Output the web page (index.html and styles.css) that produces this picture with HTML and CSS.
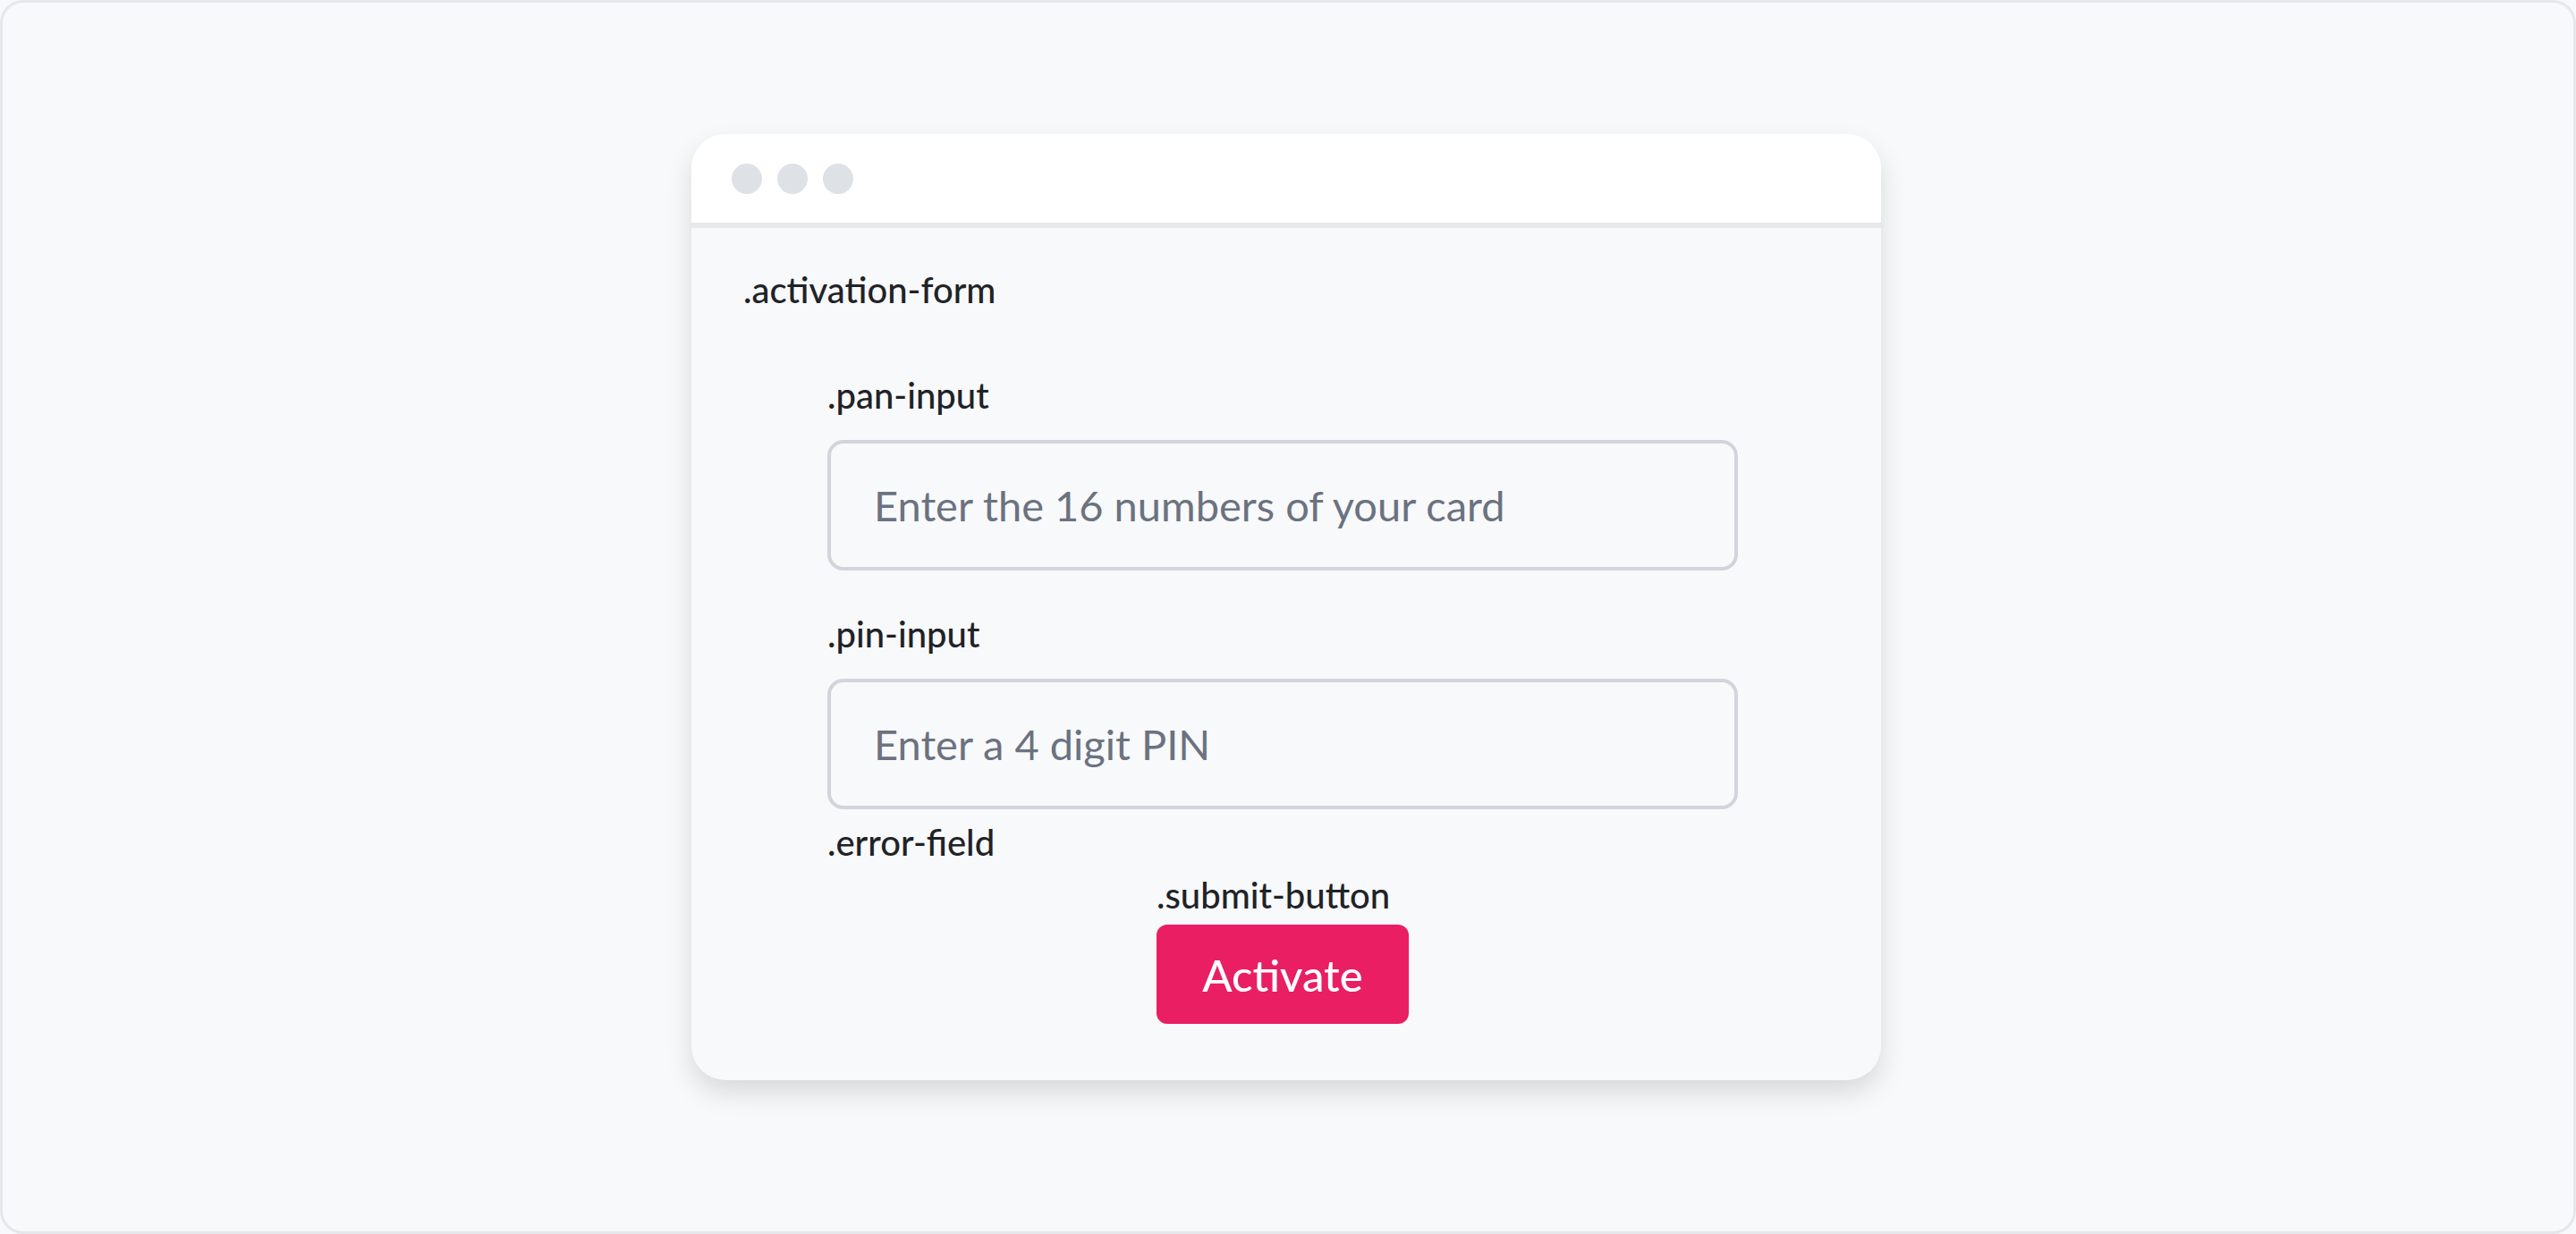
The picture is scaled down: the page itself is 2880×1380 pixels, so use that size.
FILE: index.html
```html
<!DOCTYPE html>
<html lang="en">

<head>
  <meta charset="UTF-8">
  <meta name="viewport" content="width=device-width, initial-scale=1.0">
  <title>Card Activation</title>
  <link rel="stylesheet" href="styles.css">
</head>

<body>
  <div class="frame">
    <div class="window">
      <div class="title-bar">
        <span class="dot"></span>
        <span class="dot"></span>
        <span class="dot"></span>
      </div>

      <div class="window-body">
        <p class="tag">.activation-form</p>

        <form id="activationForm" class="activation-form">
          <p class="tag">.pan-input</p>
          <input type="text" id="pan" name="pan" class="field" placeholder="Enter the 16 numbers of your card">

          <p class="tag tag-pin">.pin-input</p>
          <input type="text" id="pin" name="pin" class="field" placeholder="Enter a 4 digit PIN">

          <p class="tag tag-error">.error-field</p>

          <div class="submit-wrap">
            <p class="tag">.submit-button</p>
            <button type="submit" class="submit-button">Activate</button>
          </div>
        </form>
      </div>
    </div>
  </div>
</body>

</html>
```

FILE: styles.css
```css
html,
body {
  margin: 0;
  padding: 0;
}

body {
  font-family: Lato, "Noto Sans", sans-serif;
  background-color: #f8f9fb;
  color: #1f2328;
}

.frame {
  box-sizing: border-box;
  width: 2880px;
  height: 1380px;
  border: 3px solid #e5e7eb;
  border-radius: 26px;
  background-color: #f8f9fb;
  display: flex;
  flex-direction: column;
  align-items: center;
  padding-top: 147px;
}

.window {
  width: 1330px;
  margin-right: 4px;
  border-radius: 38px;
  background-color: #f8f9fa;
  box-shadow: 0 14px 30px rgba(0, 0, 0, 0.13);
  overflow: hidden;
}

.title-bar {
  height: 99px;
  background-color: #fff;
  border-bottom: 6px solid #e8e8e8;
  display: flex;
  align-items: center;
  gap: 17px;
  padding-left: 45px;
}

.dot {
  width: 34px;
  height: 34px;
  border-radius: 50%;
  background-color: #dee1e6;
}

.window-body {
  padding: 46px 58px 63px;
}

.tag {
  margin: 0;
  font-size: 40px;
  line-height: 46px;
  font-weight: 500;
  color: #1f2328;
}

.activation-form {
  width: 1018px;
  margin: 72px 0 0 94px;
  display: flex;
  flex-direction: column;
}

.field {
  box-sizing: border-box;
  width: 100%;
  height: 146px;
  margin-top: 27px;
  padding: 0 48px;
  font-family: Lato, "Noto Sans", sans-serif;
  font-size: 47px;
  color: #1f2328;
  background-color: #f8f9fa;
  border: 4px solid #d1d5db;
  border-radius: 18px;
  outline: none;
}

.field::placeholder {
  color: #6b7280;
}

.tag-pin {
  margin-top: 48px;
}

.tag-error {
  margin-top: 14px;
}

.submit-wrap {
  align-self: center;
  margin-top: 13px;
  display: flex;
  flex-direction: column;
}

.submit-button {
  width: 282px;
  height: 111px;
  margin-top: 10px;
  font-family: Lato, "Noto Sans", sans-serif;
  font-size: 49px;
  font-weight: 500;
  color: #fff;
  background-color: #e91e63;
  border: none;
  border-radius: 12px;
  cursor: pointer;
}
```
